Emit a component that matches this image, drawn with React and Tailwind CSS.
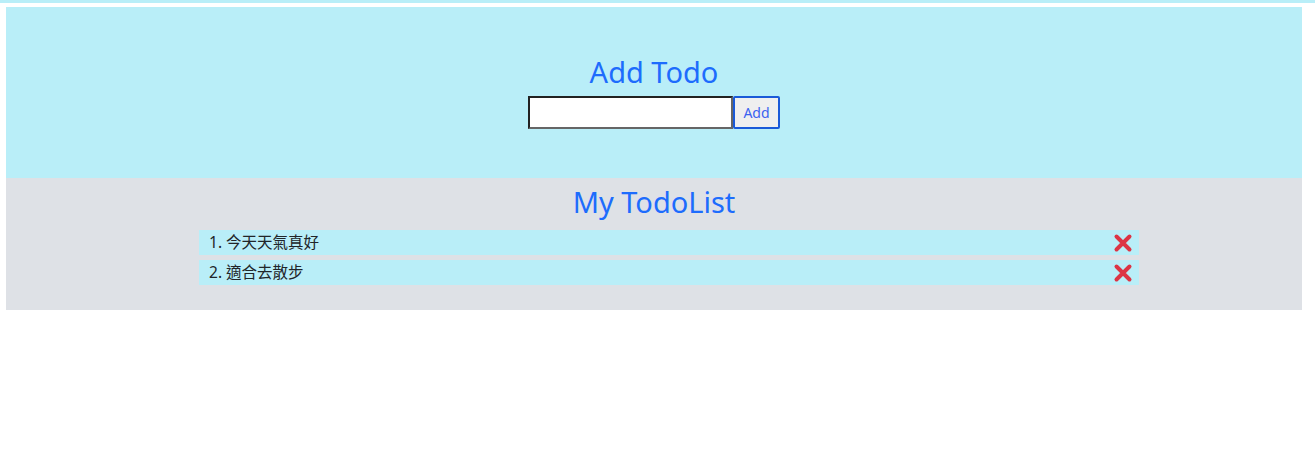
import React from "react";

function XIcon() {
  return (
    <svg width="20" height="20" viewBox="0 0 20 20" className="block">
      <path d="M3.5 3.5 L16.5 16.5 M16.5 3.5 L3.5 16.5" stroke="#dc3545" strokeWidth="4" strokeLinecap="round" fill="none" />
    </svg>
  );
}

export default function App() {
  const todos = ["今天天氣真好", "適合去散步"];
  return (
    <div className="w-[1315px] h-[453px] bg-white" style={{ fontFamily: '"Noto Sans", "Noto Sans CJK TC", sans-serif' }}>
      <div className="h-[3px] bg-[#b9eef8]" />
      <div className="mt-[4px] ml-[6px] w-[1296px]">
        <div className="bg-[#b9eef8] pt-[47px] pb-[49px] flex flex-col items-center">
          <h2 className="text-[29px] leading-[35px] text-[#1d6cfd] m-0">Add Todo</h2>
          <div className="mt-[7px] flex h-[33px]">
            <input className="w-[205px] h-[33px] bg-white border-2 border-t-[#222] border-l-[#222] border-r-[#666] border-b-[#666] outline-none" />
            <button className="h-[33px] w-[47px] bg-[#efefef] border-2 border-[#1a5ad8] rounded-[2px] text-[14px] text-[#3b63f0]">Add</button>
          </div>
        </div>
        <div className="bg-[#dee1e6] pt-[6px] pb-[25px] flex flex-col items-center">
          <h2 className="text-[29px] leading-[35px] text-[#1d6cfd] m-0">My TodoList</h2>
          <ul className="mt-[11px] w-[940px] flex flex-col gap-[5px] self-start ml-[193px]">
            {todos.map((t, i) => (
              <li key={i} className="h-[25px] bg-[#b9eef8] flex items-center justify-between pl-[10px] pr-[6px] text-[15.5px] text-[#212529]">
                <span>{i + 1}. {t}</span>
                <XIcon />
              </li>
            ))}
          </ul>
        </div>
      </div>
    </div>
  );
}
